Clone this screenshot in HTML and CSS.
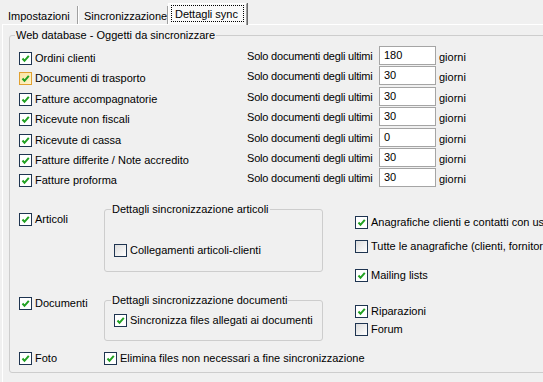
FILE: index.html
```html
<!DOCTYPE html>
<html lang="it">
<head>
    <meta charset="UTF-8">
    <meta name="viewport" content="width=device-width, initial-scale=1.0">
    <title>Dettagli sync</title>
    <link rel="stylesheet" href="styles.css">
</head>
<body>
    <div class="tabs">
        <span class="tab tab-1">Impostazioni</span>
        <span class="tab tab-2">Sincronizzazione</span>
        <span class="tab active"><span class="focus">Dettagli sync</span></span>
    </div>

    <div class="page">
        <fieldset class="group main">
            <legend>Web database - Oggetti da sincronizzare</legend>

            <div class="docs">
                <div class="doc-row">
                    <label class="check"><span class="box on"><svg viewBox="0 0 11 11"><path d="M2.5 5.5 L4.5 7.8 L8.8 2.8"/></svg></span>Ordini clienti</label>
                    <span class="limit">Solo documenti degli ultimi</span>
                    <span class="field">180</span>
                    <span class="unit">giorni</span>
                </div>
                <div class="doc-row">
                    <label class="check"><span class="box on hot"><svg viewBox="0 0 11 11"><path d="M2.5 5.5 L4.5 7.8 L8.8 2.8"/></svg></span>Documenti di trasporto</label>
                    <span class="limit">Solo documenti degli ultimi</span>
                    <span class="field">30</span>
                    <span class="unit">giorni</span>
                </div>
                <div class="doc-row">
                    <label class="check"><span class="box on"><svg viewBox="0 0 11 11"><path d="M2.5 5.5 L4.5 7.8 L8.8 2.8"/></svg></span>Fatture accompagnatorie</label>
                    <span class="limit">Solo documenti degli ultimi</span>
                    <span class="field">30</span>
                    <span class="unit">giorni</span>
                </div>
                <div class="doc-row">
                    <label class="check"><span class="box on"><svg viewBox="0 0 11 11"><path d="M2.5 5.5 L4.5 7.8 L8.8 2.8"/></svg></span>Ricevute non fiscali</label>
                    <span class="limit">Solo documenti degli ultimi</span>
                    <span class="field">30</span>
                    <span class="unit">giorni</span>
                </div>
                <div class="doc-row">
                    <label class="check"><span class="box on"><svg viewBox="0 0 11 11"><path d="M2.5 5.5 L4.5 7.8 L8.8 2.8"/></svg></span>Ricevute di cassa</label>
                    <span class="limit">Solo documenti degli ultimi</span>
                    <span class="field">0</span>
                    <span class="unit">giorni</span>
                </div>
                <div class="doc-row">
                    <label class="check"><span class="box on"><svg viewBox="0 0 11 11"><path d="M2.5 5.5 L4.5 7.8 L8.8 2.8"/></svg></span>Fatture differite / Note accredito</label>
                    <span class="limit">Solo documenti degli ultimi</span>
                    <span class="field">30</span>
                    <span class="unit">giorni</span>
                </div>
                <div class="doc-row">
                    <label class="check"><span class="box on"><svg viewBox="0 0 11 11"><path d="M2.5 5.5 L4.5 7.8 L8.8 2.8"/></svg></span>Fatture proforma</label>
                    <span class="limit">Solo documenti degli ultimi</span>
                    <span class="field">30</span>
                    <span class="unit">giorni</span>
                </div>
            </div>

            <div class="sync-row row-articoli">
                <div class="cell-left">
                    <label class="check"><span class="box on"><svg viewBox="0 0 11 11"><path d="M2.5 5.5 L4.5 7.8 L8.8 2.8"/></svg></span>Articoli</label>
                </div>
                <fieldset class="group inner inner-articoli">
                    <legend>Dettagli sincronizzazione articoli</legend>
                    <label class="check"><span class="box"></span>Collegamenti articoli-clienti</label>
                </fieldset>
                <div class="cell-right">
                    <label class="check opt-anag"><span class="box on"><svg viewBox="0 0 11 11"><path d="M2.5 5.5 L4.5 7.8 L8.8 2.8"/></svg></span>Anagrafiche clienti e contatti con username</label>
                    <label class="check opt-tutte"><span class="box"></span>Tutte le anagrafiche (clienti, fornitori, contatti)</label>
                    <label class="check opt-mail"><span class="box on"><svg viewBox="0 0 11 11"><path d="M2.5 5.5 L4.5 7.8 L8.8 2.8"/></svg></span>Mailing lists</label>
                </div>
            </div>

            <div class="sync-row row-documenti">
                <div class="cell-left">
                    <label class="check"><span class="box on"><svg viewBox="0 0 11 11"><path d="M2.5 5.5 L4.5 7.8 L8.8 2.8"/></svg></span>Documenti</label>
                </div>
                <fieldset class="group inner inner-documenti">
                    <legend>Dettagli sincronizzazione documenti</legend>
                    <label class="check"><span class="box on"><svg viewBox="0 0 11 11"><path d="M2.5 5.5 L4.5 7.8 L8.8 2.8"/></svg></span>Sincronizza files allegati ai documenti</label>
                </fieldset>
                <div class="cell-right">
                    <label class="check opt-rip"><span class="box on"><svg viewBox="0 0 11 11"><path d="M2.5 5.5 L4.5 7.8 L8.8 2.8"/></svg></span>Riparazioni</label>
                    <label class="check opt-forum"><span class="box"></span>Forum</label>
                </div>
            </div>

            <div class="sync-row row-foto">
                <div class="cell-left">
                    <label class="check"><span class="box on"><svg viewBox="0 0 11 11"><path d="M2.5 5.5 L4.5 7.8 L8.8 2.8"/></svg></span>Foto</label>
                </div>
                <label class="check"><span class="box on"><svg viewBox="0 0 11 11"><path d="M2.5 5.5 L4.5 7.8 L8.8 2.8"/></svg></span>Elimina files non necessari a fine sincronizzazione</label>
            </div>
        </fieldset>
    </div>
</body>
</html>
```

FILE: styles.css
```css
html, body {
    margin: 0;
    overflow: hidden;
    background-color: #f0f0f0;
}
body {
    font-family: "Liberation Sans", Arial, sans-serif;
    font-size: 11px;
    line-height: 13px;
    color: #000;
    width: 543px;
    height: 382px;
}

/* tabs */
.tabs {
    display: flex;
    align-items: flex-end;
    height: 24px;
    padding-left: 2px;
}
.tab {
    box-sizing: border-box;
    height: 18px;
    padding: 4px 0 0 6px;
    white-space: nowrap;
    border-right: 1px solid #a0a0a0;
    box-shadow: 1px 0 0 #fff;
}
.tab-1 {
    width: 76px;
}
.tab-2 {
    width: 90px;
    padding-left: 6px;
}
.tab.active {
    width: 79px;
    height: 22px;
    margin-bottom: -1px;
    padding: 1px 2px 0 2px;
    background-color: #f9f9f9;
    border-top: 1px solid #fff;
    border-left: 1px solid #fff;
    border-right: 1px solid #a0a0a0;
    box-shadow: 1px 0 0 #696969;
    position: relative;
}
.focus {
    display: block;
    box-sizing: border-box;
    height: 17px;
    padding: 2px 0 0 3px;
    border: 1px dotted #000;
}

/* page */
.page {
    margin-left: 2px;
    height: 358px;
    border-top: 1px solid #fff;
    border-left: 1px solid #fff;
}

.group {
    border: 1px solid #cdcdcd;
    border-radius: 3px;
    margin: 0;
    padding: 0;
    min-width: 0;
    box-sizing: border-box;
}
.group legend {
    padding: 0 1px;
    white-space: nowrap;
}
.main {
    margin: 4px 0 0 6px;
    width: 580px;
    height: 344px;
    padding-left: 9px;
}
.main > legend {
    margin-left: -4px;
}

/* checkboxes */
.check {
    display: flex;
    align-items: center;
    white-space: nowrap;
    height: 13px;
}
.box {
    box-sizing: border-box;
    width: 13px;
    height: 13px;
    flex: none;
    margin-right: 3px;
    border: 1px solid #1e3450;
    background: linear-gradient(135deg, #dcdcdc, #fff);
}
.box.on {
    background: #fff;
}
.box.hot {
    border-color: #e0a030;
    background: linear-gradient(135deg, #fbe3a0, #fff4cc);
}
.box svg {
    display: block;
    width: 11px;
    height: 11px;
}
.box path {
    fill: none;
    stroke: #21a121;
    stroke-width: 2;
}

/* document rows */
.docs {
    padding-top: 4px;
}
.doc-row {
    display: flex;
    align-items: flex-start;
    height: 20.4px;
}
.doc-row .check {
    width: 228px;
    margin-top: 6px;
}
.limit {
    width: 132px;
    margin-top: 4px;
    white-space: nowrap;
    letter-spacing: -0.2px;
}
.field {
    box-sizing: border-box;
    width: 57px;
    height: 19px;
    padding: 2px 0 0 4px;
    background: #fff;
    border: 1px solid #a5a5a5;
}
.unit {
    margin: 5px 0 0 3px;
}

/* lower section */
.sync-row {
    display: flex;
    align-items: flex-start;
}
.cell-left {
    width: 85px;
    flex: none;
}
.cell-right {
    margin-left: 32px;
    display: flex;
    flex-direction: column;
}
.inner {
    width: 219px;
    flex: none;
    padding-left: 9px;
}
.inner > legend {
    margin-left: -3px;
}

.row-articoli {
    margin-top: 14px;
}
.row-articoli .cell-left {
    margin-top: 10px;
}
.inner-articoli {
    height: 69px;
    padding-top: 28px;
}
.opt-anag { margin-top: 13px; }
.opt-tutte { margin-top: 11px; }
.opt-mail { margin-top: 16px; }

.row-documenti {
    margin-top: 12px;
}
.row-documenti .cell-left {
    margin-top: 3px;
}
.inner-documenti {
    height: 47px;
    padding-top: 7px;
}
.opt-rip { margin-top: 11px; }
.opt-forum { margin-top: 5px; }

.row-foto {
    margin-top: 11px;
}
```
